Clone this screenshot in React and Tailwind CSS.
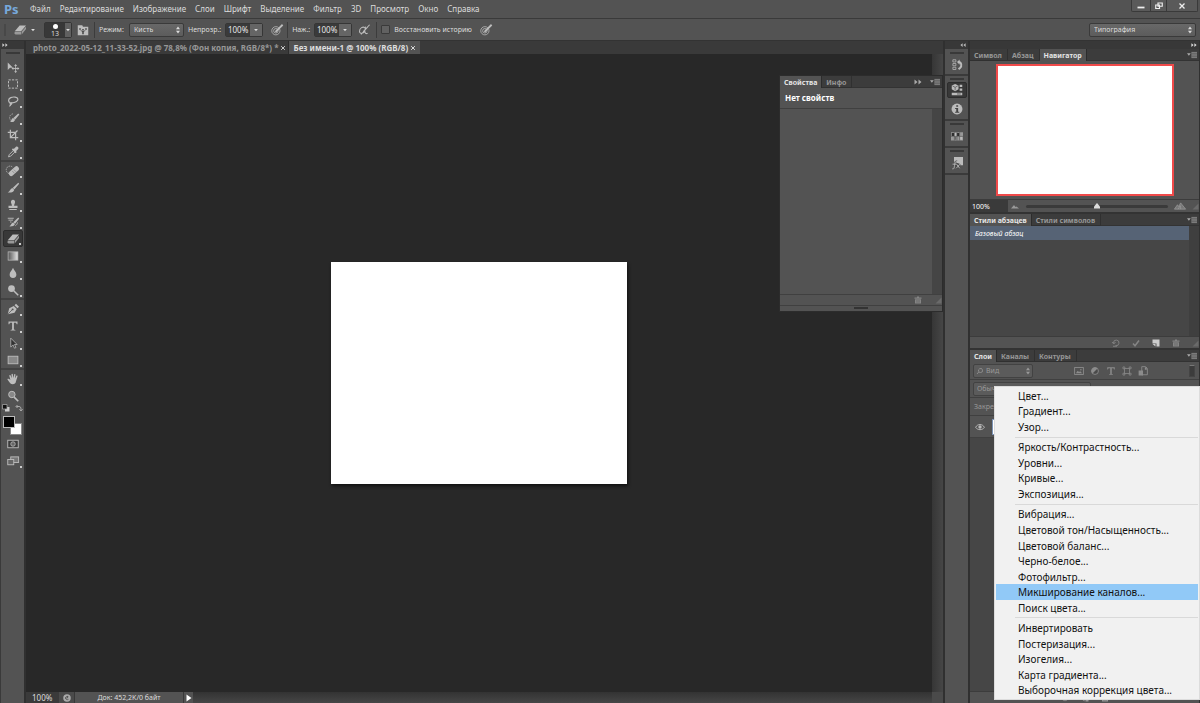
const MENU = ["Файл", "Редактирование", "Изображение", "Слои", "Шрифт", "Выделение", "Фильтр", "3D", "Просмотр", "Окно", "Справка"]

const ADJUSTMENTS = [
    ["Цвет...", "Градиент...", "Узор..."],
    ["Яркость/Контрастность...", "Уровни...", "Кривые...", "Экспозиция..."],
    ["Вибрация...", "Цветовой тон/Насыщенность...", "Цветовой баланс...", "Черно-белое...", "Фотофильтр...", "Микширование каналов...", "Поиск цвета..."],
    ["Инвертировать", "Постеризация...", "Изогелия...", "Карта градиента...", "Выборочная коррекция цвета..."],
]

// All glyphs are drawn on a 16x16 grid
const GLYPHS = {
    move: (
        <>
            <path d="M1 2v10l3-3h4z" fill="currentColor" />
            <path d="M11.5 5.500v9M7 10h9" stroke="currentColor" strokeWidth="1.200" />
            <path d="M11.500 4l2 2.500h-4zM11.500 16l2-2.500h-4zM6 10l2.500-2v4zM16.500 10L14 8v4z" fill="currentColor" />
        </>
    ),
    marquee: <rect x="2" y="2.500" width="12" height="11" fill="none" stroke="currentColor" strokeWidth="1.300" strokeDasharray="3 1.600" />,
    lasso: (
        <path d="M4.500 10.500C1 9 1.500 5 5 3.500s9-1 9.500 2-4 5-8 5c-3 0-3 2-1.500 2s2-1.500 0-2.500M5 12.500c0 1.500-1 2-2 2.500" fill="none" stroke="currentColor" strokeWidth="1.600" />
    ),
    quick: (
        <>
            <path d="M8 2.500a5 5 0 1 0 1 10" fill="none" stroke="currentColor" strokeDasharray="2 1.300" />
            <path d="M15 2l1.500 1.300-5.500 6.700L8.500 8zM8 8l2.700 2.200c-.5 3-3.700 3.600-6.700 3 2-.7 1.500-4.500 4-5.200z" fill="currentColor" />
        </>
    ),
    crop: <path d="M4.500 1v10.500H15M1 4.500h10.500V15M4.500 11.500L14 2" fill="none" stroke="currentColor" strokeWidth="1.600" />,
    dropper: (
        <>
            <path d="M9 4l3-3c2-1 4 1 3 3l-3 3 1 1-1.500 1.500-5-5L8 3z" fill="currentColor" />
            <path d="M8.500 6L3 11.500 2 14.500l3-1L10.500 8" fill="none" stroke="currentColor" strokeWidth="1.200" />
        </>
    ),
    heal: (
        <>
            <path d="M7 2.500a5 5 0 1 0-3 9" fill="none" stroke="currentColor" strokeDasharray="2 1" />
            <rect x="1" y="5" width="16" height="6.500" rx="3" fill="currentColor" transform="rotate(-42 9 8)" />
            <path d="M7 8l3 3M9 6l3 3" stroke="#777" strokeWidth=".8" />
        </>
    ),
    brush: <path d="M15 1l1.200 1.200L10 9.800 7.500 8zM7 8l2.700 2.200c-.5 3.500-4.700 4.300-8.700 3.800 3-1 3-5 6-6z" fill="currentColor" />,
    stamp: <path d="M8 1a3 3 0 0 1 2.500 4.200L9.500 8v1H14v3H2V9h4.500V8l-1-2.800A3 3 0 0 1 8 1zM3 13.200h10v1.500H3z" fill="currentColor" />,
    history: (
        <>
            <path d="M15 2l1.300 1.200-5.500 7-2.300-1.800zM8 8.600l2.500 2c-.5 2.700-4.500 3.500-7.500 3.200 2.500-.8 2.500-4.700 5-5.200z" fill="currentColor" />
            <path d="M2 5.500h6M1 3h8M4 8h2" stroke="currentColor" strokeWidth="1.200" />
            <path d="M11 13c2-1 3-3 3-4.500" fill="none" stroke="currentColor" />
        </>
    ),
    eraser: (
        <>
            <path d="M7.500 2H16L9.500 9.500H1z" fill="currentColor" />
            <path d="M1 10.300h8.500V14H2L.5 12.500zM10.300 10L16 3.500v3.200L10.300 14z" fill="#999" />
        </>
    ),
    gradient: (
        <>
            <defs>
                <linearGradient id="tool-gradient">
                    <stop offset="0" stopColor="#555" />
                    <stop offset="1" stopColor="#e6e6e6" />
                </linearGradient>
            </defs>
            <rect x="1.500" y="2.500" width="13" height="11" fill="url(#tool-gradient)" stroke="#bbb" />
        </>
    ),
    blur: <path d="M8 1c1.500 4 4.500 5.500 4.500 9a4.500 4.500 0 0 1-9 0C3.500 6.500 6.500 5 8 1z" fill="currentColor" />,
    dodge: (
        <>
            <circle cx="6" cy="6" r="4.500" fill="currentColor" />
            <path d="M9 9l6 6" stroke="currentColor" strokeWidth="2" />
        </>
    ),
    pen: (
        <>
            <path d="M1 15l2-8 6-3 4 4-3 5z" fill="currentColor" />
            <path d="M10 3l2-2 4 4-2 2z" fill="currentColor" />
            <path d="M1.500 14.500L7 9" stroke="#535353" />
            <circle cx="7.500" cy="8.500" r="1.300" fill="#535353" />
        </>
    ),
    type: <path d="M2 2h12v3.500h-1L12 3.500H9.200v9.300l2 .4v.8H4.800v-.8l2-.4V3.500H4L3 5.500H2z" fill="currentColor" />,
    arrow: <path d="M5 1.500v12l3-3 2 4.500 2-1-2-4h3.500z" fill="#333" stroke="currentColor" />,
    shape: <rect x="1.500" y="3" width="13" height="10" fill="#888" stroke="currentColor" strokeWidth="1.200" />,
    hand: (
        <path d="M4.500 9L3 3.500c0-1 1.400-1.300 1.800-.3L6.300 7 6 1.800C6 .7 7.600.6 7.800 1.600L8.600 6.500 9.700 1.800c.3-1 1.800-.7 1.600.4l-.8 5 2-3.500c.6-.9 1.900-.2 1.500.8L12 11c-.5 3-2 4-4.500 4S4 13.500 3 12L.7 8.800c-.5-.9.600-1.700 1.400-1z" fill="currentColor" />
    ),
    zoom: (
        <>
            <circle cx="6.500" cy="6" r="4.300" fill="#888" stroke="currentColor" strokeWidth="1.300" />
            <path d="M9.500 9.500l5.500 5.500" stroke="currentColor" strokeWidth="2.200" />
        </>
    ),
    mask: (
        <>
            <rect x="1" y="3" width="14" height="10" fill="#3b3b3b" stroke="currentColor" strokeWidth="1.200" />
            <circle cx="8" cy="8" r="3" fill="#666" stroke="currentColor" />
        </>
    ),
    screen: (
        <>
            <rect x="5" y="2.500" width="10.500" height="7.500" fill="#777" stroke="currentColor" strokeWidth="1.200" />
            <rect x="1" y="6" width="8" height="7" fill="#666" stroke="currentColor" strokeWidth="1.200" />
        </>
    ),
    pressure: (
        <>
            <circle cx="6.500" cy="9" r="5.500" fill="none" stroke="currentColor" />
            <circle cx="6.500" cy="9" r="3" fill="none" stroke="currentColor" />
            <path d="M15.500 1L6 10.500" stroke="currentColor" strokeWidth="2.400" />
        </>
    ),
    airbrush: (
        <path d="M9 5c-2-2-7 0-7 4.500S8 13 9 9l1-5.500M9 9c0 3 2 5 4 3M15.500 1L7 10M4 14l9-10" fill="none" stroke="currentColor" strokeWidth="1.400" />
    ),
    brushPanel: (
        <>
            <path d="M1 1.500h6l1 2h7V15H1z" fill="currentColor" />
            <path d="M3 5.500h2v2H3zM7 6.500h2v2H7zM11 5.500h2v2h-2zM4 7.500l3 3v3h2v-3l3-3-4 2z" fill="#444" />
        </>
    ),
    historyPanel: (
        <>
            <path d="M2.500 1h4v3h-4zM2.500 6h4v3h-4zM2.500 11h4v3h-4z" fill="none" stroke="currentColor" />
            <path d="M10 4c4 0 5 5 2 8l-2 1.500" fill="none" stroke="currentColor" strokeWidth="2.600" />
            <path d="M8 4l3.500-3.500v7z" fill="currentColor" />
        </>
    ),
    props: (
        <>
            <path d="M5.500 0L10 2v5L5.500 9.500 1 7V2z" fill="currentColor" />
            <path d="M5.500 4.500v4M2 2.500l3.500 2 3.500-2" fill="none" stroke="#555" />
            <path d="M11.500 1H15v3h-3.500zM11.500 6H15v3h-3.500zM1 11.500h14V15H1z" fill="currentColor" />
            <path d="M8 13.300h5" stroke="#444" />
        </>
    ),
    info: (
        <>
            <circle cx="8" cy="8" r="7.300" fill="currentColor" />
            <path d="M7 3h2.500v2H7zM5.500 6.500h4v5H11V13H5.500v-1.500H7V8H5.500z" fill="#444" />
        </>
    ),
    swatches: (
        <>
            <rect x="0" y="3" width="16" height="11" fill="#999" />
            <path d="M1 4h3v4H1zM8 4h3v4H8z" fill="#2e2e2e" />
            <path d="M5 9h2v4H5z" fill="#666" />
            <path d="M12 9h3v4h-3zM5 4h2v4H5z" fill="currentColor" />
            <path d="M0 8.500h16M4.500 3v11M8 3v11M11.500 3v11" stroke="#555" strokeWidth=".8" />
        </>
    ),
    fx: (
        <>
            <path d="M4 0h12v11h-5l-1-3H4z" fill="currentColor" />
            <path d="M8 6c-3-1-3 4-4 9-.5 1.500-2 1-2.500.5M2 9.500h5M7.500 9.500l4 5.500M12 9.500l-5 5.500" fill="none" stroke="#444" strokeWidth="2.500" />
            <path d="M8 6c-3-1-3 4-4 9-.5 1.500-2 1-2.500.5M2 9.500h5M7.500 9.500l4 5.500M12 9.500l-5 5.500" fill="none" stroke="currentColor" strokeWidth="1.300" />
        </>
    ),
    trash: (
        <>
            <path d="M1 3h14v2.500H1zM6 1h4v2H6z" fill="currentColor" />
            <path d="M2 6.500h12V15H2z" fill="currentColor" />
            <path d="M5.500 8v5.500M8 8v5.500M10.500 8v5.500" stroke="#555" strokeWidth=".8" />
        </>
    ),
    undo: <path d="M3 8a5.500 5.500 0 1 1 4 5M0 6l3.500 4L7 6M2 14.500h8" fill="none" stroke="currentColor" strokeWidth="1.800" />,
    check: <path d="M2 9l4 4.500L14 3" fill="none" stroke="currentColor" strokeWidth="3" />,
    page: (
        <>
            <path d="M1 1h14v14H9V9H1z" fill="currentColor" />
            <path d="M1 10h6v5z" fill="currentColor" />
        </>
    ),
    picture: (
        <>
            <rect x="1" y="2.500" width="14" height="11" fill="none" stroke="currentColor" strokeWidth="1.400" />
            <path d="M3 11.500l3-4 2 2 2-1 3 3z" fill="currentColor" />
            <circle cx="11" cy="6" r="1.200" fill="currentColor" />
        </>
    ),
    adjust: (
        <>
            <circle cx="8" cy="8" r="5.500" fill="#4a4a4a" stroke="currentColor" strokeWidth="1.400" />
            <path d="M12 4a5.500 5.500 0 0 0-8 8z" fill="currentColor" />
        </>
    ),
    transform: (
        <path d="M4 4h8v8H4zM1.500 1.500h3v3h-3zM11.500 1.500h3v3h-3zM1.500 11.500h3v3h-3zM11.500 11.500h3v3h-3z" fill="none" stroke="currentColor" strokeWidth="1.200" />
    ),
    smart: (
        <>
            <path d="M6 1h6l3 3v10H6z" fill="none" stroke="currentColor" strokeWidth="1.400" />
            <path d="M1 7h7v8H1zM11 2h3v4h-3z" fill="currentColor" />
        </>
    ),
    eye: (
        <>
            <path d="M1 8.500c3-6 11-6 14 0-3 5-11 5-14 0z" fill="none" stroke="currentColor" strokeWidth="1.500" />
            <circle cx="8" cy="8" r="2.700" fill="currentColor" />
        </>
    ),
    search: <path d="M6 9.500a4 4 0 1 1 3 1.500c-2 0-3-.5-4-1.500M5.500 10L2 14" fill="none" stroke="currentColor" strokeWidth="1.500" />,
    swap: <path d="M3 5h5c3 0 4 2 4 6M5 2L2 5l3 3M9 10l3 4 3-4" fill="none" stroke="currentColor" strokeWidth="1.700" />,
    defaults: (
        <>
            <path d="M6 6h9v9H6z" fill="#ccc" />
            <path d="M1 1h9v9H1z" fill="#111" stroke="#aaa" strokeWidth="1.500" />
        </>
    ),
    restore: <path d="M6 2h8.500v6.500H6zM1.500 6H9v7H1.500z" fill="#535353" stroke="currentColor" strokeWidth="2.400" />,
    close: <path d="M3 3l10 10M13 3L3 13" stroke="currentColor" strokeWidth="2.600" />,
    minimize: <path d="M1 11h14" stroke="currentColor" strokeWidth="3.500" />,
    forward: <path d="M1 3l6 5-6 5zM9 3l6 5-6 5z" fill="currentColor" />,
    back: <path d="M7 3L1 8l6 5zM15 3L9 8l6 5z" fill="currentColor" />,
    caret: <path d="M3 5h10l-5 6z" fill="currentColor" />,
    play: <path d="M3 1l10 7-10 7z" fill="currentColor" />,
    updown: <path d="M4 6.500L8 1l4 5.500zM4 9.500L8 15l4-5.500z" fill="currentColor" />,
    panelMenu: (
        <>
            <path d="M0 5h6L3 9z" fill="currentColor" />
            <path d="M7 3h9v10H7z" fill="#7d7d7d" />
            <path d="M7 5.500h9M7 8h9M7 10.500h9" stroke="#555" strokeWidth=".8" />
        </>
    ),
    mountSmall: <path d="M0 13l6-7 3 4 2-1 5 4z" fill="currentColor" />,
    mountLarge: <path d="M-1 13L4 6l2 3 3-6 8 10zM5 13l3-5M9 13V7" fill="#777" stroke="currentColor" strokeWidth="1.200" />,
    thumb: <path d="M8 2l6 7v4H2V9z" fill="currentColor" />,
    status: (
        <>
            <circle cx="8" cy="8" r="7.500" fill="#aaa" />
            <path d="M11 5.500c-3-2-6 0-6 2.500s3 4.500 6 2.500M5 8h4V4" fill="none" stroke="#444" strokeWidth="1.400" />
        </>
    ),
    resize: <path d="M15 3v12H3z" fill="#6a6a6a" />,
}

const SIZES = { 6: "size-1.5", 8: "size-2", 10: "size-2.5", 12: "size-3" }

function Icon({ name, size = 12, className = "" }) {
    return (
        <svg viewBox="0 0 16 16" aria-hidden="true" className={`${SIZES[size]} shrink-0 overflow-visible ${className}`}>
            {GLYPHS[name]}
        </svg>
    )
}

function Gripper() {
    return <div className="mx-auto my-[2px] h-[2px] w-[14px] bg-[#393939]" />
}

function Divider() {
    return <div className="h-4 w-px shrink-0 bg-[#3c3c3c]" />
}

function Tabs({ tabs, active, children }) {
    return (
        <div className="flex h-3 shrink-0 items-stretch bg-[#3c3c3c] text-[7px] font-bold" role="tablist">
            {tabs.map((tab) => (
                <button
                    key={tab}
                    role="tab"
                    aria-selected={tab === active}
                    className={
                        tab === active
                            ? "border-r border-[#2c2c2c] bg-[#535353] px-1 text-[#e4e4e4]"
                            : "border-r border-b border-[#303030] pt-px pr-[5px] pl-1 text-[#979797]"
                    }
                >
                    {tab}
                </button>
            ))}
            <div className="flex flex-1 items-center justify-end gap-2 border-b border-[#333] pr-[2px] text-[#aaa]">
                {children}
                <button aria-label="Меню панели" className="flex">
                    <Icon name="panelMenu" size={10} />
                </button>
            </div>
        </div>
    )
}

function NumberField({ id, label }) {
    return (
        <>
            <label htmlFor={id}>{label}</label>
            <div className="ml-1 flex h-[14px] items-stretch rounded-[2px] border border-[#363636]">
                <input id={id} defaultValue="100%" className="w-6 bg-[#3a3a3a] text-center text-[8px] text-[#e6e6e6]" />
                <button aria-label={`${label} значения`} className="flex w-3 items-center justify-center bg-[#656565]">
                    <Icon name="caret" size={6} />
                </button>
            </div>
        </>
    )
}

function SelectBox({ label, value, className }) {
    return (
        <div className={`relative flex h-[14px] items-center rounded-[2px] border border-[#3a3a3a] bg-linear-to-b from-[#686868] to-[#5c5c5c] ${className}`}>
            <select aria-label={label} className="h-full w-full appearance-none px-1 text-inherit outline-none">
                <option>{value}</option>
            </select>
            <Icon name="updown" size={8} className="pointer-events-none absolute right-px" />
        </div>
    )
}

function TitleBar() {
    return (
        <header className="flex h-[19px] shrink-0 items-stretch border-b border-[#3a3a3a] pl-1">
            <span className="flex w-[18px] items-center text-[13px] font-bold text-[#77a9dc]">Ps</span>
            <nav className="flex items-center gap-[9px] pl-2">
                {MENU.map((item) => (
                    <button key={item}>{item}</button>
                ))}
            </nav>
            <div className="mr-[2px] ml-auto flex h-3 items-stretch rounded-b-[2px] border border-t-0 border-[#3a3a3a] bg-[#5a5a5a] text-[#eee]">
                <button aria-label="Свернуть" className="flex w-[18px] items-center justify-center"><Icon name="minimize" size={8} /></button>
                <button aria-label="Восстановить" className="flex w-[17px] items-center justify-center border-x border-[#3a3a3a]"><Icon name="restore" size={8} /></button>
                <button aria-label="Закрыть" className="flex w-[30px] items-center justify-center"><Icon name="close" size={8} /></button>
            </div>
        </header>
    )
}

function OptionsBar() {
    return (
        <div className="flex h-[22px] shrink-0 items-center border-b border-[#333] pr-1 pl-1 text-[7px]">
            <div className="mr-2 h-3 w-[2px] bg-[#484848]" />
            <button aria-label="Ластик" className="flex items-center gap-1">
                <Icon name="eraser" className="text-[#bdbdbd]" />
                <Icon name="caret" size={6} />
            </button>
            <button aria-label="Кисть 13" className="ml-2 flex h-4 items-stretch rounded-[2px] border border-[#353535]">
                <span className="flex w-5 flex-col items-center justify-between bg-[#383838]">
                    <i className="mt-px size-[5px] rounded-full bg-white" />
                    13
                </span>
                <span className="flex w-[6px] items-center bg-[#606060]"><Icon name="caret" size={6} /></span>
            </button>
            <button aria-label="Панель кистей" className="mx-[5px] flex text-[#bdbdbd]"><Icon name="brushPanel" /></button>
            <Divider />
            <span className="mx-1 w-[26px]">Режим:</span>
            <SelectBox label="Режим" value="Кисть" className="mr-1 w-[55px]" />
            <NumberField id="opacity" label="Непрозр.:" />
            <button aria-label="Нажим для непрозрачности" className="mr-1 ml-2 flex text-[#bdbdbd]"><Icon name="pressure" /></button>
            <Divider />
            <span className="w-1" />
            <NumberField id="flow" label="Наж.:" />
            <button aria-label="Аэрограф" className="mx-[6px] flex text-[#bdbdbd]"><Icon name="airbrush" /></button>
            <Divider />
            <label className="ml-1 flex items-center gap-1">
                <input type="checkbox" className="size-[9px] appearance-none rounded-[1px] border border-[#3a3a3a] bg-[#616161]" />
                Восстановить историю
            </label>
            <button aria-label="Нажим для размера" className="ml-2 flex text-[#bdbdbd]"><Icon name="pressure" /></button>
            <SelectBox label="Рабочая среда" value="Типография" className="ml-auto w-[107px]" />
        </div>
    )
}

const TOOLS = [
    ["move", "marquee", "lasso", "quick", "crop", "dropper"],
    ["heal", "brush", "stamp", "history", "eraser", "gradient", "blur", "dodge"],
    ["pen", "type", "arrow", "shape"],
    ["hand", "zoom"],
]

function Tool({ name, active }) {
    const single = name === "move" || name === "zoom" || name === "mask"
    return (
        <button
            aria-label={name}
            className={`relative mx-auto flex h-[17px] w-5 items-center justify-center rounded-[2px] ${active ? "border border-[#2c2c2c] bg-[#383838]" : ""}`}
        >
            <Icon name={name} />
            {!single && <i className="absolute right-px bottom-px size-[2px] bg-[#ccc]" />}
        </button>
    )
}

function Toolbar() {
    return (
        <aside className="flex w-[26px] shrink-0 flex-col border-r-2 border-l border-r-[#303030] border-l-[#3a3a3a] text-[#bdbdbd]">
            <div className="flex h-2 items-center bg-[#383838] pl-px text-[#ccc]"><Icon name="forward" size={6} /></div>
            <div className="h-[9px] pt-px"><Gripper /></div>
            {TOOLS.map((group, i) => (
                <div key={group[0]} className={i ? "border-t-2 border-[#424242]" : ""}>
                    {group.map((name) => (
                        <Tool key={name} name={name} active={name === "eraser"} />
                    ))}
                </div>
            ))}
            <div className="flex justify-between px-px">
                <button aria-label="Цвета по умолчанию" className="flex"><Icon name="defaults" size={8} /></button>
                <button aria-label="Поменять цвета" className="flex"><Icon name="swap" size={8} /></button>
            </div>
            <div className="relative mx-[2px] mt-1 h-[19px]">
                <button aria-label="Фоновый цвет" className="absolute right-0 bottom-0 size-3 border border-[#888] bg-white" />
                <button aria-label="Основной цвет" className="absolute top-0 left-0 size-3 border border-[#bbb] bg-black" />
            </div>
            <Tool name="mask" />
            <Tool name="screen" />
        </aside>
    )
}

function DocumentArea() {
    return (
        <main className="flex min-w-0 flex-1 flex-col">
            <div className="flex h-[13px] shrink-0 items-stretch bg-[#3a3a3a] font-bold" role="tablist">
                <button role="tab" className="flex items-center gap-[2px] border-r border-[#2c2c2c] pr-[2px] pl-[7px] text-[#979797]">
                    photo_2022-05-12_11-33-52.jpg @ 78,8% (Фон копия, RGB/8*) *
                    <Icon name="close" size={6} className="text-[#ccc]" />
                </button>
                <button role="tab" aria-selected="true" className="flex items-center gap-[2px] bg-[#535353] px-1 text-[#ddd]">
                    Без имени-1 @ 100% (RGB/8)
                    <Icon name="close" size={6} />
                </button>
            </div>
            <div className="flex min-h-0 flex-1 bg-[#282828]">
                <div className="flex flex-1 items-center justify-center">
                    <div className="h-[222px] w-[296px] bg-white shadow-[1px_2px_3px_#111]" />
                </div>
                <div className="w-[11px] bg-linear-to-r from-[#363636] to-[#464646]" />
            </div>
            <div className="flex h-[11px] shrink-0 items-stretch bg-linear-to-b from-[#333] to-[#464646]">
                <input aria-label="Масштаб" defaultValue="100%" className="w-[33px] bg-[#3a3a3a] pl-[6px]" />
                <button aria-label="Состояние" className="flex w-[15px] items-center justify-center bg-[#4a4a4a]"><Icon name="status" size={8} /></button>
                <span className="w-[110px] border-x border-[#383838] bg-[#535353] text-center text-[7px] leading-[11px]">Док: 452,2K/0 байт</span>
                <button aria-label="Сведения" className="flex w-[9px] items-center justify-center bg-[#535353] text-white"><Icon name="play" size={8} /></button>
                <div className="ml-auto w-[11px] bg-[#4a4a4a]" />
            </div>
        </main>
    )
}

function PropertiesPanel() {
    return (
        <section className="absolute top-[75px] right-[257px] flex h-[237px] w-[164px] flex-col border border-[#2c2c2c] bg-[#535353]">
            <Tabs tabs={["Свойства", "Инфо"]} active="Свойства">
                <Icon name="forward" size={8} />
            </Tabs>
            <h2 className="flex h-[21px] items-center border-b border-[#404040] pl-[5px] font-bold text-white">Нет свойств</h2>
            <div className="flex flex-1 justify-end"><div className="w-[10px] bg-[#454545]" /></div>
            <div className="flex h-3 items-center justify-end border-y border-[#404040] text-[#858585]">
                <Icon name="trash" size={8} className="mr-3" />
                <Icon name="resize" size={8} />
            </div>
            <div className="h-[5px]"><div className="mx-auto mt-px h-[2px] w-[14px] bg-[#333]" /></div>
        </section>
    )
}

function Dock() {
    return (
        <aside className="flex w-[27px] shrink-0 flex-col border-r-2 border-l-2 border-[#303030] text-[#bbb]">
            <div className="flex h-2 items-center justify-end bg-[#383838] pr-[2px]"><Icon name="back" size={6} /></div>
            <div className="flex h-[27px] flex-col items-center border-b-2 border-[#3a3a3a] pt-px">
                <Gripper />
                <button aria-label="История" className="mt-[3px] flex"><Icon name="historyPanel" /></button>
            </div>
            <div className="flex h-[45px] flex-col items-center border-b-2 border-[#3a3a3a]">
                <Gripper />
                <button aria-label="Свойства" className="flex h-4 w-5 items-center justify-center rounded-[2px] border border-[#2d2d2d] bg-[#383838]">
                    <Icon name="props" />
                </button>
                <button aria-label="Инфо" className="mt-[5px] flex"><Icon name="info" /></button>
            </div>
            <div className="flex h-[27px] flex-col items-center border-b-2 border-[#3a3a3a]">
                <Gripper />
                <button aria-label="Образцы" className="mt-[3px] flex"><Icon name="swatches" /></button>
            </div>
            <div className="flex h-[27px] flex-col items-center border-b-2 border-[#3a3a3a]">
                <Gripper />
                <button aria-label="Стили" className="mt-[3px] flex"><Icon name="fx" /></button>
            </div>
        </aside>
    )
}

function Panels() {
    return (
        <aside className="flex w-[230px] shrink-0 flex-col border-r border-[#303030]">
            <div className="flex h-2 items-center justify-end bg-[#383838] pr-[2px]"><Icon name="forward" size={6} /></div>

            <section>
                <Tabs tabs={["Символ", "Абзац", "Навигатор"]} active="Навигатор" />
                <div className="flex h-[138px] justify-center pt-[3px]">
                    <div className="h-[132px] w-[178px] border-2 border-[#f04a4a] bg-white" />
                </div>
                <div className="flex h-[13px] items-center border-t border-[#3c3c3c]">
                    <input aria-label="Масштаб навигатора" defaultValue="100%" className="h-full w-[38px] bg-[#3a3a3a] pl-[2px] text-[7px] text-white" />
                    <Icon name="mountSmall" size={8} className="ml-[3px] text-[#999]" />
                    <div className="relative mx-[7px] flex flex-1 items-center justify-center">
                        <div className="absolute inset-x-0 h-[3px] rounded-full bg-[#3a3a3a]" />
                        <input aria-label="Увеличение" type="range" className="absolute inset-0 w-full opacity-0" />
                        <Icon name="thumb" size={8} className="relative" />
                    </div>
                    <Icon name="mountLarge" size={10} className="mr-[6px] text-[#999]" />
                    <Icon name="resize" size={8} />
                </div>
            </section>

            <section className="border-t-2 border-[#333]">
                <Tabs tabs={["Стили абзацев", "Стили символов"]} active="Стили абзацев" />
                <div className="flex h-[110px] bg-[#464646]">
                    <div className="flex-1">
                        <button className="flex h-[14px] w-full items-center bg-[#566375] pl-[5px] text-[7px] text-white italic">Базовый абзац</button>
                    </div>
                    <div className="w-[10px] bg-[#3f3f3f]" />
                </div>
                <div className="flex h-3 items-center justify-end border-t border-[#3c3c3c] text-[#858585]">
                    <div className="mr-[11px] flex gap-3">
                        <Icon name="undo" size={8} />
                        <Icon name="check" size={8} />
                        <Icon name="page" size={8} className="text-[#ccc]" />
                        <Icon name="trash" size={8} />
                    </div>
                    <Icon name="resize" size={8} />
                </div>
            </section>

            <section className="flex min-h-0 flex-1 flex-col border-t-2 border-[#333] text-[#999]">
                <Tabs tabs={["Слои", "Каналы", "Контуры"]} active="Слои" />
                <div className="flex h-[18px] shrink-0 items-center border-b border-[#404040] pl-[3px]">
                    <div className="relative flex h-[14px] w-[60px] items-center rounded-[2px] border border-[#424242] bg-[#5b5b5b]">
                        <Icon name="search" size={8} className="absolute left-[2px]" />
                        <select aria-label="Фильтр слоев" className="h-full w-full appearance-none pl-3 text-[7px] outline-none"><option>Вид</option></select>
                        <Icon name="updown" size={8} className="pointer-events-none absolute right-0" />
                    </div>
                    <div className="ml-[41px] flex gap-[6px] text-[#8c8c8c]">
                        {["picture", "adjust", "type", "transform", "smart"].map((name) => (
                            <button key={name} aria-label={name} className="flex"><Icon name={name} size={10} /></button>
                        ))}
                    </div>
                    <button aria-label="Включить фильтр" className="mr-1 ml-auto h-3 w-[6px] border border-[#444] border-t-[#777] bg-[#3c3c3c]" />
                </div>
                <div className="flex h-[18px] shrink-0 items-center border-b border-[#404040] px-[3px] text-[7px]">
                    <select aria-label="Режим наложения" className="h-[14px] w-[118px] appearance-none rounded-[2px] border border-[#424242] bg-[#5b5b5b] px-[3px]"><option>Обычные</option></select>
                </div>
                <div className="flex h-[18px] shrink-0 items-center border-b border-[#404040] pl-1 text-[7px]">Закрепить:</div>
                <div className="flex h-[22px] shrink-0 items-center border-b border-[#404040] pl-[5px]">
                    <Icon name="eye" size={10} className="text-[#bbb]" />
                    <div className="ml-[7px] h-4 w-5 border border-[#7c93b5] bg-white" />
                </div>
                <div className="flex-1 bg-[#464646]" />
                <div className="flex h-3 shrink-0 items-center justify-center gap-3 border-t border-[#3c3c3c]">
                    <Icon name="adjust" size={8} />
                    <Icon name="page" size={8} />
                    <Icon name="trash" size={8} />
                </div>
            </section>
        </aside>
    )
}

function AdjustmentMenu() {
    return (
        <div role="menu" className="absolute right-0 bottom-[3px] flex h-[314px] w-[206px] flex-col border border-[#dcdcdc] bg-[#f1f1f1] py-px text-[10px] text-[#111]">
            {ADJUSTMENTS.map((group, i) => (
                <div key={group[0]} className="contents">
                    {i > 0 && <div className="mr-px ml-5 h-[5px] shrink-0 pt-[2px]"><div className="h-px bg-[#d9d9d9]" /></div>}
                    {group.map((item) => (
                        <button
                            key={item}
                            role="menuitem"
                            className={`mx-px flex min-h-0 flex-1 items-center pl-[22px] ${item === "Микширование каналов..." ? "bg-[#91c9f7]" : ""}`}
                        >
                            {item}
                        </button>
                    ))}
                </div>
            ))}
        </div>
    )
}

export default function App() {
    return (
        <div className="relative flex h-screen flex-col overflow-hidden bg-[#535353] font-['Noto_Sans','Open_Sans',sans-serif] text-[8px] leading-none whitespace-nowrap text-[#dcdcdc]">
            <TitleBar />
            <OptionsBar />
            <div className="flex min-h-0 flex-1">
                <Toolbar />
                <DocumentArea />
                <Dock />
                <Panels />
            </div>
            <PropertiesPanel />
            <AdjustmentMenu />
        </div>
    )
}
